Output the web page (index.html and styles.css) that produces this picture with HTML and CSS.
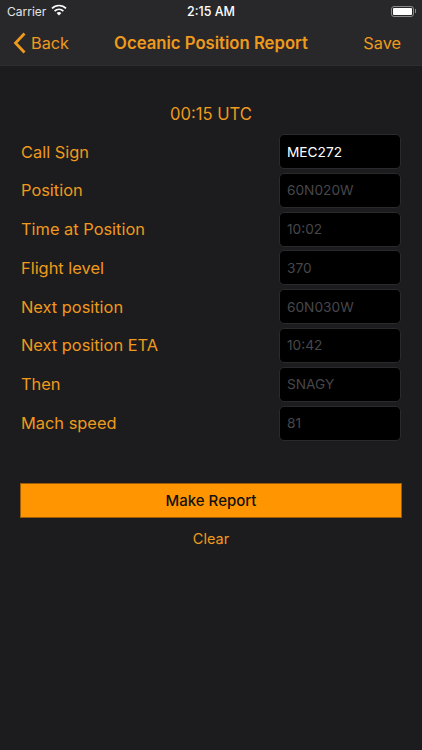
FILE: index.html
```html
<!DOCTYPE html>
<html lang="en">
<head>
    <meta charset="UTF-8">
    <meta name="viewport" content="width=device-width, initial-scale=1.0">
    <title>Oceanic Position Report</title>
    <link rel="stylesheet" href="styles.css">
</head>
<body>
    <div class="screen">
        <div class="status-bar">
            <div class="status-left">
                <span>Carrier</span>
                <svg class="wifi" width="16" height="12" viewBox="0 0 16 12">
                    <path d="M8 11.6 5.6 9.1a3.4 3.4 0 0 1 4.8 0z" fill="#fff"/>
                    <path d="M3.6 7.1a6.2 6.2 0 0 1 8.8 0" fill="none" stroke="#fff" stroke-width="1.7"/>
                    <path d="M1 4.4a9.9 9.9 0 0 1 14 0" fill="none" stroke="#fff" stroke-width="1.7"/>
                </svg>
            </div>
            <div class="status-time">2:15 AM</div>
            <div class="battery">
                <div class="battery-body"><div class="battery-fill"></div></div>
                <div class="battery-nub"></div>
            </div>
        </div>

        <div class="nav-bar">
            <div class="nav-back">
                <svg width="13" height="22" viewBox="0 0 13 22">
                    <path d="M11.5 1.5 2.5 11l9 9.500" fill="none" stroke="#ef9a1c" stroke-width="2.8"/>
                </svg>
                <span>Back</span>
            </div>
            <div class="nav-title">Oceanic Position Report</div>
            <div class="nav-save">Save</div>
        </div>

        <div class="content">
            <div class="utc">00:15 UTC</div>

            <div class="form-row">
                <label>Call Sign</label>
                <div class="field field-active">MEC272</div>
            </div>
            <div class="form-row">
                <label>Position</label>
                <div class="field">60N020W</div>
            </div>
            <div class="form-row">
                <label>Time at Position</label>
                <div class="field">10:02</div>
            </div>
            <div class="form-row">
                <label>Flight level</label>
                <div class="field">370</div>
            </div>
            <div class="form-row">
                <label>Next position</label>
                <div class="field">60N030W</div>
            </div>
            <div class="form-row">
                <label>Next position ETA</label>
                <div class="field">10:42</div>
            </div>
            <div class="form-row">
                <label>Then</label>
                <div class="field">SNAGY</div>
            </div>
            <div class="form-row">
                <label>Mach speed</label>
                <div class="field">81</div>
            </div>

            <button class="make-report">Make Report</button>
            <div class="clear">Clear</div>
        </div>
    </div>
</body>
</html>
```

FILE: styles.css
```css
html, body {
    margin: 0;
    height: 100%;
}
body {
    font-family: Inter, "Liberation Sans", sans-serif;
    background-color: #1c1c1e;
}
.screen {
    width: 422px;
    height: 750px;
    overflow: hidden;
    background-color: #1c1c1e;
}
.status-bar {
    height: 22px;
    padding: 0 6px 0 7px;
    display: grid;
    grid-template-columns: 1fr auto 1fr;
    align-items: center;
    background-color: #28282a;
    color: #fff;
    font-size: 12.5px;
}
.status-left {
    display: flex;
    align-items: center;
    gap: 5px;
    color: #e4e4e4;
    font-size: 12px;
}
.wifi {
    margin-top: -3px;
}
.status-time {
    margin-left: -1px;
    font-weight: 500;
}
.battery {
    justify-self: end;
    display: flex;
    align-items: center;
    gap: 1px;
}
.battery-body {
    box-sizing: border-box;
    width: 23px;
    height: 11px;
    padding: 1px;
    border: 1px solid #8a8a8a;
    border-radius: 3px;
}
.battery-fill {
    height: 100%;
    background-color: #fff;
    border-radius: 1px;
}
.battery-nub {
    width: 1px;
    height: 4px;
    background-color: #8a8a8a;
}
.nav-bar {
    box-sizing: border-box;
    height: 44px;
    padding: 0 13px 2px;
    display: grid;
    grid-template-columns: 1fr auto 1fr;
    align-items: center;
    background-color: #28282a;
    border-bottom: 1px solid #2e2e30;
    color: #ef9a1c;
    font-size: 16.3px;
}
.nav-back {
    display: flex;
    align-items: center;
    gap: 5px;
}
.nav-title {
    font-size: 16.7px;
    font-weight: 600;
}
.nav-save {
    margin-right: 8px;
    text-align: right;
}
.content {
    padding: 37px 21px 0;
}
.utc {
    margin-bottom: 9px;
    text-align: center;
    color: #ef9a1c;
    font-size: 16.6px;
    line-height: 22px;
}
.form-row {
    height: 35px;
    margin-bottom: 3.8px;
    display: flex;
    align-items: center;
    justify-content: space-between;
}
.form-row label {
    color: #ef9a1c;
    font-size: 16.4px;
}
.field {
    box-sizing: border-box;
    width: 122px;
    height: 35px;
    padding: 0 7px;
    display: flex;
    align-items: center;
    background-color: #000;
    border: 1px solid #2a2a2c;
    border-radius: 5px;
    color: #47474a;
    font-size: 13.7px;
}
.field-active {
    color: #fff;
}
.make-report {
    display: block;
    width: 382px;
    height: 35px;
    margin: 42px 0 0 -1px;
    background-color: #ff9500;
    border: 1px solid #9a5c06;
    color: #111;
    font-family: inherit;
    font-size: 15px;
    font-weight: 500;
}
.clear {
    margin-top: 12px;
    text-align: center;
    color: #ef9a1c;
    font-size: 14.5px;
    line-height: 18px;
}
```
